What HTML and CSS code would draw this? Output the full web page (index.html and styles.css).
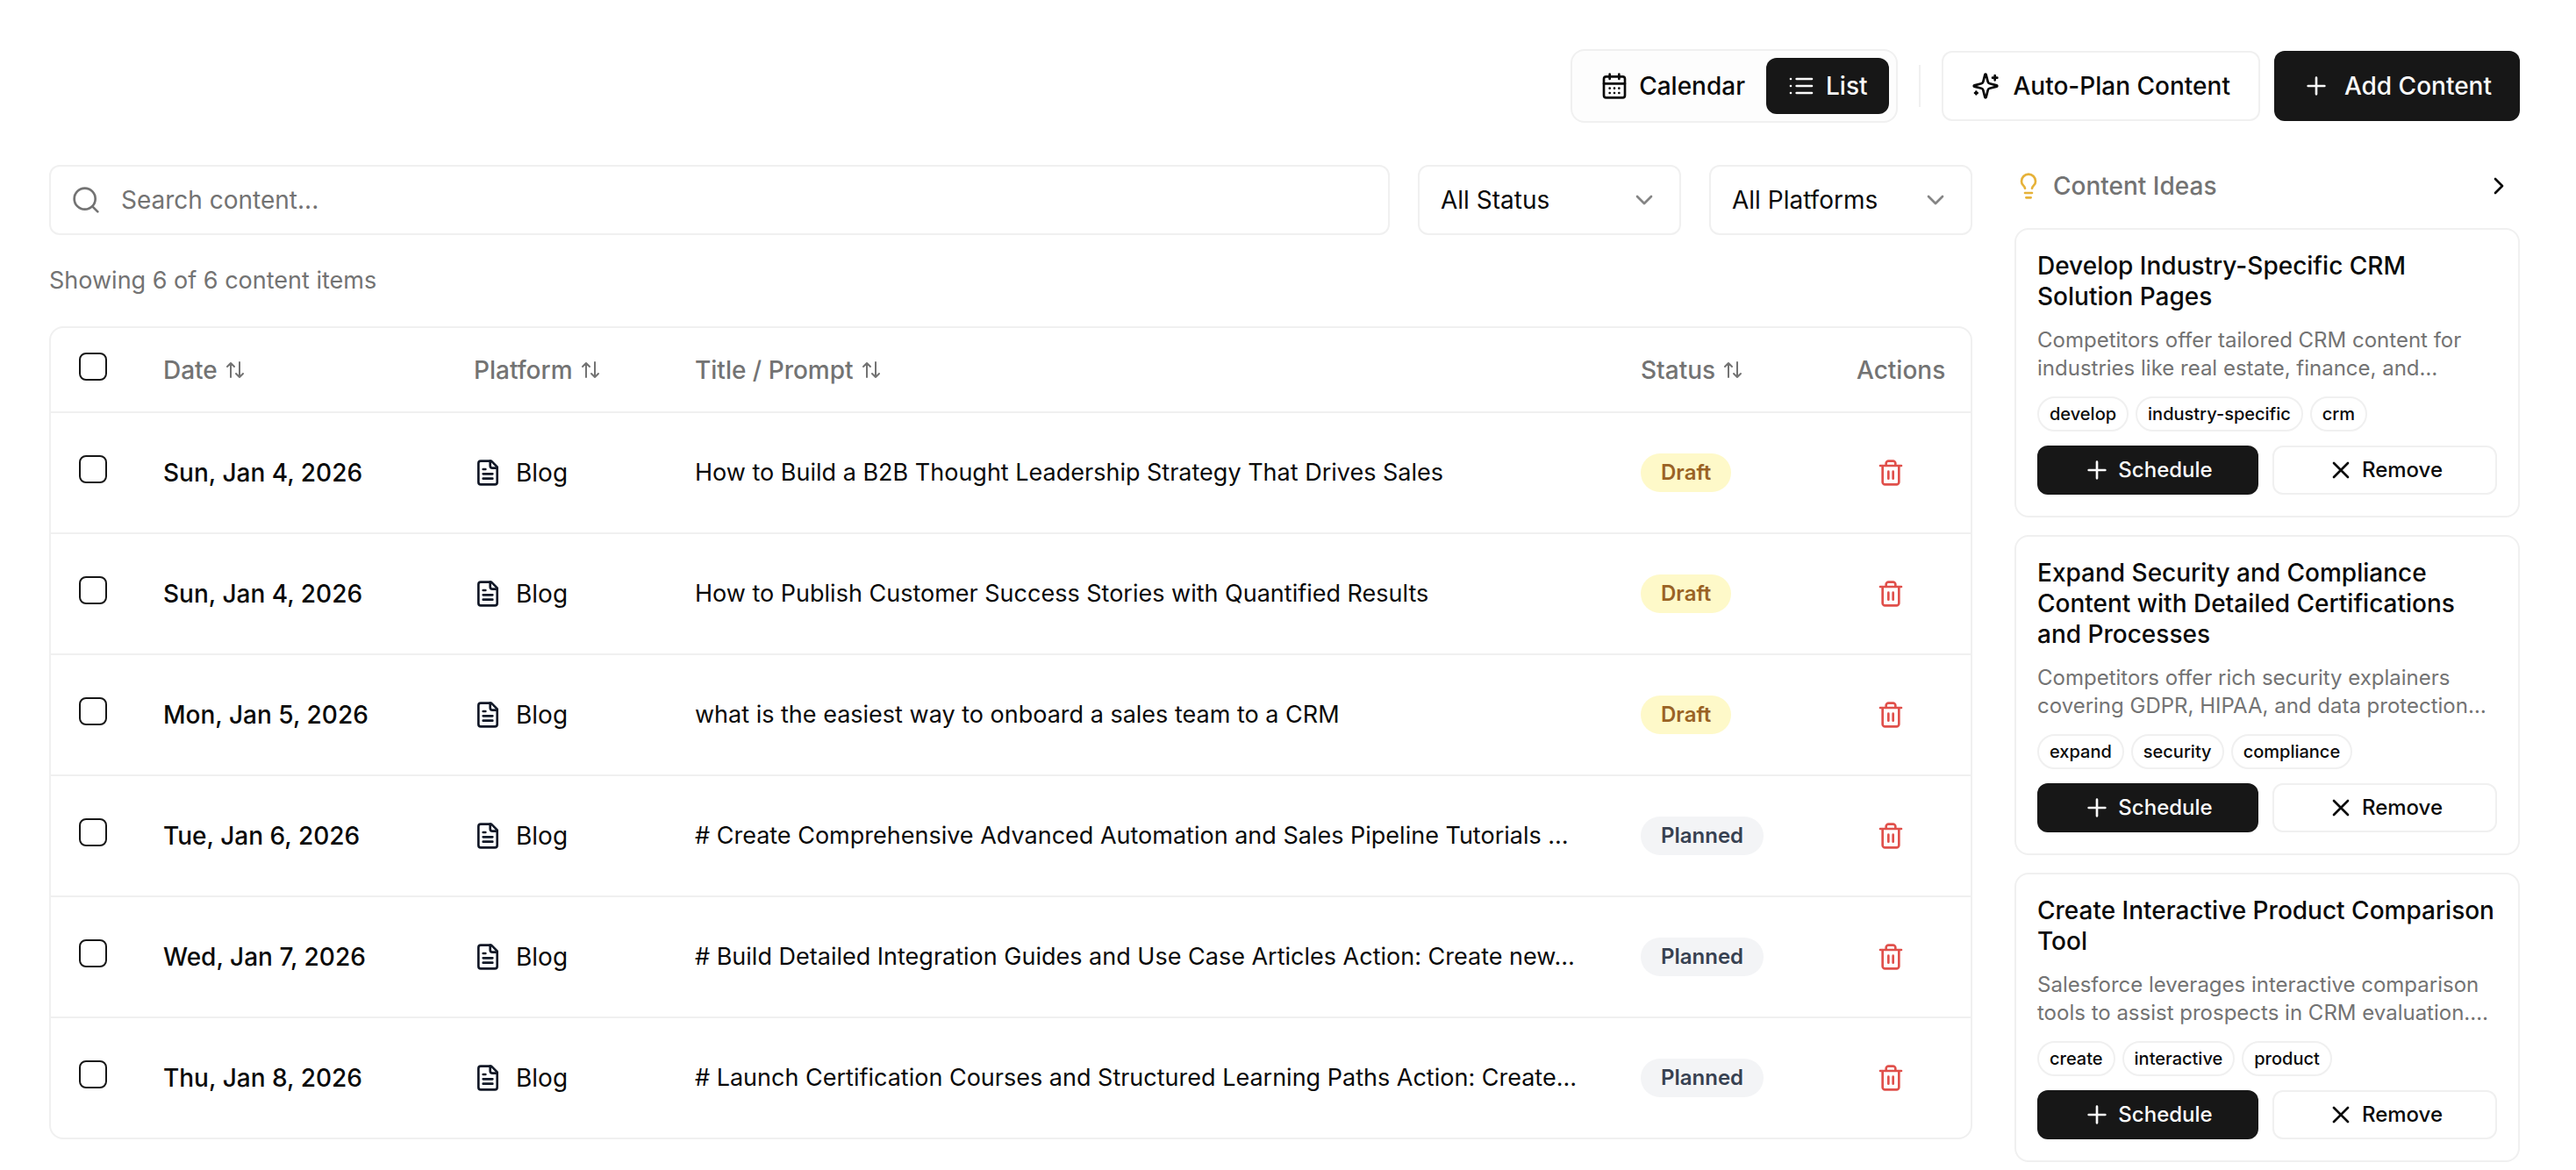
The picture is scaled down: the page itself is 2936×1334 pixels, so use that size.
FILE: index.html
```html
<!DOCTYPE html>
<html lang="en">
<head>
<meta charset="utf-8">
<title>Content Planner</title>
<link rel="stylesheet" href="styles.css">
</head>
<body>
<svg class="sprite" aria-hidden="true">
  <symbol id="i-calendar" viewBox="0 0 24 24"><path d="M8 2v4M16 2v4M3 10h18M8 14h.01M12 14h.01M16 14h.01M8 18h.01M12 18h.01M16 18h.01"/><rect width="18" height="18" x="3" y="4" rx="2"/></symbol>
  <symbol id="i-list" viewBox="0 0 24 24"><path d="M3 12h.01M3 18h.01M3 6h.01M8 12h13M8 18h13M8 6h13"/></symbol>
  <symbol id="i-sparkles" viewBox="0 0 24 24"><path d="M9.937 15.5A2 2 0 0 0 8.5 14.063l-6.135-1.582a.5.5 0 0 1 0-.962L8.5 9.936A2 2 0 0 0 9.937 8.5l1.582-6.135a.5.5 0 0 1 .963 0L14.063 8.5A2 2 0 0 0 15.5 9.937l6.135 1.581a.5.5 0 0 1 0 .964L15.5 14.063a2 2 0 0 0-1.437 1.437l-1.582 6.135a.5.5 0 0 1-.963 0z"/><path d="M20 3v4M22 5h-4M4 17v2M5 18H3"/></symbol>
  <symbol id="i-plus" viewBox="0 0 24 24"><path d="M5 12h14M12 5v14"/></symbol>
  <symbol id="i-x" viewBox="0 0 24 24"><path d="M18 6 6 18M6 6l12 12"/></symbol>
  <symbol id="i-search" viewBox="0 0 24 24"><circle cx="11" cy="11" r="9"/><path d="m22 22-4.500-4.500"/></symbol>
  <symbol id="i-down" viewBox="0 0 24 24"><path d="m6 9 6 6 6-6"/></symbol>
  <symbol id="i-right" viewBox="0 0 24 24"><path d="m9 18 6-6-6-6"/></symbol>
  <symbol id="i-bulb" viewBox="0 0 24 24"><path d="M15 14c.2-1 .7-1.700 1.500-2.500 1-.9 1.500-2.200 1.500-3.500A6 6 0 0 0 6 8c0 1 .2 2.200 1.500 3.500.7.7 1.300 1.500 1.500 2.500M9 18h6M10 22h4"/></symbol>
  <symbol id="i-sort" viewBox="0 0 24 24"><path d="M7 20V4M3 8l4-4 4 4M17 3v17M13 16l4 4 4-4"/></symbol>
  <symbol id="i-file" viewBox="0 0 24 24"><path d="M15 2H6a2 2 0 0 0-2 2v16a2 2 0 0 0 2 2h12a2 2 0 0 0 2-2V7Z"/><path d="M14 2v4a2 2 0 0 0 2 2h4M10 9H8M16 13H8M16 17H8"/></symbol>
  <symbol id="i-trash" viewBox="0 0 24 24"><path d="M3 6h18M19 6v14c0 1-1 2-2 2H7c-1 0-2-1-2-2V6M8 6V4c0-1 1-2 2-2h4c1 0 2 1 2 2v2M10 11v6M14 11v6"/></symbol>
</svg>
<div class="page">
  <header class="toolbar">
    <div class="toggle" role="group" aria-label="View">
      <button class="toggle-item" type="button"><svg class="icon"><use href="#i-calendar"/></svg>Calendar</button>
      <button class="toggle-item active" type="button" aria-pressed="true"><svg class="icon"><use href="#i-list"/></svg>List</button>
    </div>
    <span class="divider"></span>
    <div class="actions">
      <button class="btn outline" type="button"><svg class="icon"><use href="#i-sparkles"/></svg>Auto-Plan Content</button>
      <button class="btn primary" type="button"><svg class="icon"><use href="#i-plus"/></svg>Add Content</button>
    </div>
  </header>

  <div class="columns">
    <main class="main">
      <div class="filters">
        <label class="search">
          <svg class="icon"><use href="#i-search"/></svg>
          <input type="search" placeholder="Search content..." aria-label="Search content">
        </label>
        <div class="select">
          <select aria-label="Status"><option>All Status</option><option>Draft</option><option>Planned</option></select>
          <svg class="icon"><use href="#i-down"/></svg>
        </div>
        <div class="select">
          <select aria-label="Platform"><option>All Platforms</option><option>Blog</option></select>
          <svg class="icon"><use href="#i-down"/></svg>
        </div>
      </div>
      <p class="count">Showing 6 of 6 content items</p>
      <div class="table-wrap">
        <table>
          <colgroup><col class="c-check"><col class="c-date"><col class="c-platform"><col><col class="c-status"><col class="c-actions"></colgroup>
          <thead>
            <tr>
              <th class="check"><input type="checkbox" aria-label="Select all"></th>
              <th><button class="sort" type="button">Date<svg><use href="#i-sort"/></svg></button></th>
              <th><button class="sort" type="button">Platform<svg><use href="#i-sort"/></svg></button></th>
              <th><button class="sort" type="button">Title / Prompt<svg><use href="#i-sort"/></svg></button></th>
              <th><button class="sort" type="button">Status<svg><use href="#i-sort"/></svg></button></th>
              <th>Actions</th>
            </tr>
          </thead>
          <tbody>
            <tr>
              <td class="check"><input type="checkbox" aria-label="Select row"></td>
              <td class="date">Sun, Jan 4, 2026</td>
              <td><span class="platform"><svg class="icon"><use href="#i-file"/></svg>Blog</span></td>
              <td class="title">How to Build a B2B Thought Leadership Strategy That Drives Sales</td>
              <td><span class="badge draft">Draft</span></td>
              <td><button class="delete" type="button" aria-label="Delete"><svg class="icon"><use href="#i-trash"/></svg></button></td>
            </tr>
            <tr>
              <td class="check"><input type="checkbox" aria-label="Select row"></td>
              <td class="date">Sun, Jan 4, 2026</td>
              <td><span class="platform"><svg class="icon"><use href="#i-file"/></svg>Blog</span></td>
              <td class="title">How to Publish Customer Success Stories with Quantified Results</td>
              <td><span class="badge draft">Draft</span></td>
              <td><button class="delete" type="button" aria-label="Delete"><svg class="icon"><use href="#i-trash"/></svg></button></td>
            </tr>
            <tr>
              <td class="check"><input type="checkbox" aria-label="Select row"></td>
              <td class="date">Mon, Jan 5, 2026</td>
              <td><span class="platform"><svg class="icon"><use href="#i-file"/></svg>Blog</span></td>
              <td class="title">what is the easiest way to onboard a sales team to a CRM</td>
              <td><span class="badge draft">Draft</span></td>
              <td><button class="delete" type="button" aria-label="Delete"><svg class="icon"><use href="#i-trash"/></svg></button></td>
            </tr>
            <tr>
              <td class="check"><input type="checkbox" aria-label="Select row"></td>
              <td class="date">Tue, Jan 6, 2026</td>
              <td><span class="platform"><svg class="icon"><use href="#i-file"/></svg>Blog</span></td>
              <td class="title"># Create Comprehensive Advanced Automation and Sales Pipeline Tutorials …</td>
              <td><span class="badge planned">Planned</span></td>
              <td><button class="delete" type="button" aria-label="Delete"><svg class="icon"><use href="#i-trash"/></svg></button></td>
            </tr>
            <tr>
              <td class="check"><input type="checkbox" aria-label="Select row"></td>
              <td class="date">Wed, Jan 7, 2026</td>
              <td><span class="platform"><svg class="icon"><use href="#i-file"/></svg>Blog</span></td>
              <td class="title"># Build Detailed Integration Guides and Use Case Articles Action: Create new…</td>
              <td><span class="badge planned">Planned</span></td>
              <td><button class="delete" type="button" aria-label="Delete"><svg class="icon"><use href="#i-trash"/></svg></button></td>
            </tr>
            <tr>
              <td class="check"><input type="checkbox" aria-label="Select row"></td>
              <td class="date">Thu, Jan 8, 2026</td>
              <td><span class="platform"><svg class="icon"><use href="#i-file"/></svg>Blog</span></td>
              <td class="title"># Launch Certification Courses and Structured Learning Paths Action: Create…</td>
              <td><span class="badge planned">Planned</span></td>
              <td><button class="delete" type="button" aria-label="Delete"><svg class="icon"><use href="#i-trash"/></svg></button></td>
            </tr>
          </tbody>
        </table>
      </div>
    </main>

    <aside class="ideas">
      <div class="ideas-head">
        <svg class="icon bulb"><use href="#i-bulb"/></svg>
        <h2>Content Ideas</h2>
        <button class="collapse" type="button" aria-label="Collapse"><svg class="icon"><use href="#i-right"/></svg></button>
      </div>
      <article class="card">
        <h3>Develop Industry-Specific CRM Solution Pages</h3>
        <p>Competitors offer tailored CRM content for industries like real estate, finance, and…</p>
        <div class="tags"><span>develop</span><span>industry-specific</span><span>crm</span></div>
        <div class="card-actions">
          <button class="btn small primary" type="button"><svg class="icon"><use href="#i-plus"/></svg>Schedule</button>
          <button class="btn small outline" type="button"><svg class="icon"><use href="#i-x"/></svg>Remove</button>
        </div>
      </article>
      <article class="card">
        <h3>Expand Security and Compliance Content with Detailed Certifications and Processes</h3>
        <p>Competitors offer rich security explainers covering GDPR, HIPAA, and data protection…</p>
        <div class="tags"><span>expand</span><span>security</span><span>compliance</span></div>
        <div class="card-actions">
          <button class="btn small primary" type="button"><svg class="icon"><use href="#i-plus"/></svg>Schedule</button>
          <button class="btn small outline" type="button"><svg class="icon"><use href="#i-x"/></svg>Remove</button>
        </div>
      </article>
      <article class="card">
        <h3>Create Interactive Product Comparison Tool</h3>
        <p>Salesforce leverages interactive comparison tools to assist prospects in CRM evaluation.…</p>
        <div class="tags"><span>create</span><span>interactive</span><span>product</span></div>
        <div class="card-actions">
          <button class="btn small primary" type="button"><svg class="icon"><use href="#i-plus"/></svg>Schedule</button>
          <button class="btn small outline" type="button"><svg class="icon"><use href="#i-x"/></svg>Remove</button>
        </div>
      </article>
    </aside>
  </div>
</div>
</body>
</html>
```
FILE: styles.css
```css
:root {
  --border: #f0f0f0;
  --text: #0a0a0a;
  --muted: #737373;
  --dark: #171717;
}

* { box-sizing: border-box; }

body {
  margin: 0;
  background: #fff;
  color: var(--text);
  font-family: Inter, "Liberation Sans", sans-serif;
  font-size: 28px;
  line-height: 40px;
}

button, input, select { font: inherit; color: inherit; }
button { margin: 0; padding: 0; border: 0; background: none; cursor: pointer; }
h2, h3, p { margin: 0; font-size: 28px; font-weight: 500; }
svg { fill: none; stroke: currentColor; stroke-width: 2; stroke-linecap: round; stroke-linejoin: round; }
.sprite { display: none; }
.icon { width: 32px; height: 32px; flex: none; }

.page { padding: 56px 64px 8px 56px; }

.toolbar { display: flex; align-items: center; justify-content: flex-end; gap: 24px; }
.toggle { display: flex; padding: 8px; border: 2px solid var(--border); border-radius: 16px; background: #fdfdfd; }
.toggle-item { display: flex; align-items: center; gap: 12px; height: 64px; padding: 0 24px; border-radius: 12px; font-weight: 500; }
.toggle-item.active { background: var(--dark); color: #fafafa; }
.divider { width: 2px; height: 48px; background: var(--border); }
.actions { display: flex; gap: 16px; }

.btn { display: flex; align-items: center; justify-content: center; gap: 16px; height: 80px; padding: 0 32px; border-radius: 12px; font-weight: 500; white-space: nowrap; }
.btn.primary { background: var(--dark); color: #fafafa; }
.btn.outline { border: 2px solid var(--border); background: #fff; }
.btn.small { flex: 1 1 0; gap: 8px; height: 56px; padding: 0 24px; font-size: 24px; }

.columns { display: flex; align-items: flex-start; gap: 48px; margin-top: 48px; }
.main { flex: 1; min-width: 0; }

.filters { display: flex; gap: 32px; }
.search { display: flex; flex: 1; align-items: center; gap: 24px; height: 80px; padding: 0 24px; border: 2px solid var(--border); border-radius: 12px; color: var(--muted); }
.search .icon { stroke-width: 2; }
.search input { flex: 1; min-width: 0; padding: 0; border: 0; outline: 0; background: none; appearance: none; }
.search input::placeholder { color: var(--muted); opacity: 1; }
.select { display: grid; align-items: center; width: 300px; height: 80px; }
.select > * { grid-area: 1 / 1; }
.select select { width: 100%; height: 100%; padding: 0 24px; border: 2px solid var(--border); border-radius: 12px; background: #fff; appearance: none; }
.select .icon { justify-self: end; margin-right: 26px; color: #858585; pointer-events: none; }

.count { margin: 32px 0; color: var(--muted); font-size: 27px; font-weight: 400; }

.table-wrap { overflow: hidden; border: 2px solid var(--border); border-radius: 16px; }
table { width: 100%; table-layout: fixed; border-collapse: separate; border-spacing: 0; }
.c-check { width: 96px; }
.c-date { width: 354px; }
.c-platform { width: 252px; }
.c-status { width: 246px; }
.c-actions { width: 162px; }
th, td { padding: 0 32px; border-bottom: 2px solid var(--border); text-align: left; vertical-align: middle; white-space: nowrap; }
th { height: 97px; color: var(--muted); font-weight: 500; }
td { height: 138px; }
tbody tr:last-child td { height: 136px; border-bottom: 0; }
.check { padding-bottom: 8px; }
.check input { display: block; width: 32px; height: 32px; margin: 0; border: 2px solid var(--dark); border-radius: 8px; appearance: none; }
.sort { display: flex; align-items: center; gap: 8px; }
.sort svg { width: 24px; height: 24px; }
.date { font-weight: 500; }
.title { overflow: hidden; font-size: 27px; text-overflow: ellipsis; }
.platform { display: flex; align-items: center; gap: 16px; }
.platform .icon { color: #111827; }
.badge { display: inline-flex; align-items: center; height: 44px; padding: 0 23px; border-radius: 22px; font-size: 24px; font-weight: 600; vertical-align: middle; }
.draft { background: #fef9c9; color: #9a6324; }
.planned { background: #f3f4f6; color: #374151; }
.delete { display: flex; align-items: center; justify-content: center; width: 78px; height: 64px; color: #e0504b; }

.ideas { display: flex; flex-direction: column; gap: 20px; width: 576px; flex: none; }
.ideas-head { display: flex; align-items: center; gap: 12px; height: 48px; margin-bottom: 4px; }
.ideas-head h2 { flex: 1; color: var(--muted); }
.bulb { color: #e6b239; }
.collapse { display: flex; align-items: center; justify-content: center; width: 48px; height: 48px; }
.card { display: flex; flex-direction: column; gap: 16px; padding: 24px; border: 2px solid var(--border); border-radius: 16px; }
.card h3 { line-height: 35px; }
.card p { color: var(--muted); font-size: 24px; font-weight: 400; line-height: 32px; }
.tags { display: flex; gap: 8px; }
.tags span { display: flex; align-items: center; height: 40px; padding: 0 12px; border: 2px solid var(--border); border-radius: 20px; font-size: 20px; font-weight: 500; }
.card-actions { display: flex; gap: 16px; }
```
